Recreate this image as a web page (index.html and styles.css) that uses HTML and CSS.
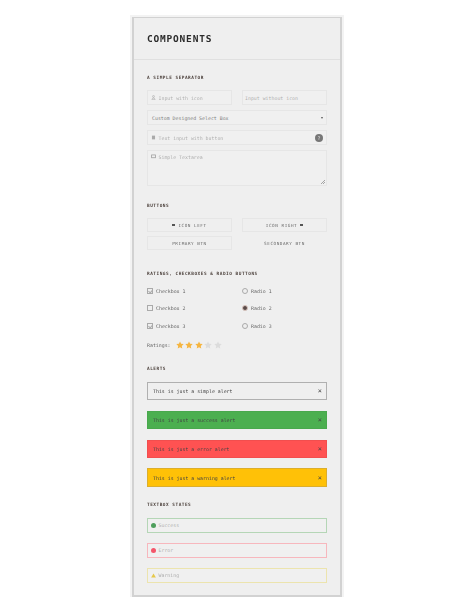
FILE: index.html
```html
<!DOCTYPE html>
<html lang="en">
<head>
  <meta charset="UTF-8" />
  <title>Components</title>
  <link rel="stylesheet" href="styles.css">
</head>
<body>
  <div class="card">
    <header class="card-head">
      <h1>COMPONENTS</h1>
    </header>
    <main class="card-body">
      <h2 class="sep sep-first">A SIMPLE SEPARATOR</h2>
      <div class="two-col">
        <div class="field">
          <svg class="ico" viewBox="0 0 8 8"><circle cx="4" cy="2.2" r="1.5" fill="none" stroke="#aaa" stroke-width=".9"/><path d="M1 7h6M2 7l1-2.500h2L6 7" fill="none" stroke="#aaa" stroke-width=".9"/></svg>
          <span>Input with icon</span>
        </div>
        <div class="field field-plain"><span>Input without icon</span></div>
      </div>
      <div class="field field-select"><span>Custom Designed Select Box</span><i class="caret"></i></div>
      <div class="field">
        <svg class="ico" viewBox="0 0 8 8"><rect x="1.500" y="1" width="5" height="6" fill="#aaa"/></svg>
        <span>Text input with button</span>
        <b class="round-btn">?</b>
      </div>
      <div class="field field-area">
        <svg class="ico" viewBox="0 0 8 8"><rect x="1" y="1.500" width="6" height="4.500" fill="none" stroke="#999" stroke-width="1.200"/></svg>
        <span>Simple Textarea</span>
        <svg class="grip" viewBox="0 0 5 5"><path d="M0 5L5 0M2.500 5L5 2.500" stroke="#777" stroke-width=".8"/></svg>
      </div>

      <h2 class="sep sep-buttons">BUTTONS</h2>
      <div class="btn-grid">
        <div class="btn"><i class="dot"></i>ICON LEFT</div>
        <div class="btn">ICON RIGHT<i class="dot"></i></div>
        <div class="btn">PRIMARY BTN</div>
        <div class="btn btn-flat">SECONDARY BTN</div>
      </div>

      <h2 class="sep sep-ratings">RATINGS, CHECKBOXES &amp; RADIO BUTTONS</h2>
      <div class="choices">
        <label class="choice"><i class="box box-on"></i>Checkbox 1</label>
        <label class="choice"><i class="radio"></i>Radio 1</label>
        <label class="choice"><i class="box"></i>Checkbox 2</label>
        <label class="choice"><i class="radio radio-on"></i>Radio 2</label>
        <label class="choice"><i class="box box-on"></i>Checkbox 3</label>
        <label class="choice"><i class="radio"></i>Radio 3</label>
      </div>
      <div class="ratings">
        <span>Ratings:</span>
        <span class="stars">
          <svg class="star on" viewBox="0 0 20 20"><path d="M10 1l2.800 6 6.400.8-4.700 4.400 1.200 6.500L10 15.500l-5.700 3.200 1.200-6.500L.8 7.800 7.200 7z"/></svg>
          <svg class="star on" viewBox="0 0 20 20"><path d="M10 1l2.800 6 6.400.8-4.700 4.400 1.200 6.500L10 15.500l-5.700 3.200 1.200-6.500L.8 7.800 7.200 7z"/></svg>
          <svg class="star on" viewBox="0 0 20 20"><path d="M10 1l2.800 6 6.400.8-4.700 4.400 1.200 6.500L10 15.500l-5.700 3.200 1.200-6.500L.8 7.800 7.200 7z"/></svg>
          <svg class="star" viewBox="0 0 20 20"><path d="M10 1l2.800 6 6.400.8-4.700 4.400 1.200 6.500L10 15.500l-5.700 3.200 1.200-6.500L.8 7.800 7.200 7z"/></svg>
          <svg class="star" viewBox="0 0 20 20"><path d="M10 1l2.800 6 6.400.8-4.700 4.400 1.200 6.500L10 15.500l-5.700 3.200 1.200-6.500L.8 7.800 7.200 7z"/></svg>
        </span>
      </div>

      <h2 class="sep sep-alerts">ALERTS</h2>
      <div class="alerts">
        <div class="alert">This is just a simple alert<b>×</b></div>
        <div class="alert alert-success">This is just a success alert<b>×</b></div>
        <div class="alert alert-error">This is just a error alert<b>×</b></div>
        <div class="alert alert-warning">This is just a warning alert<b>×</b></div>
      </div>

      <h2 class="sep sep-states">TEXTBOX STATES</h2>
      <div class="states">
        <div class="field state state-success"><i class="state-dot"></i><span>Success</span></div>
        <div class="field state state-error"><i class="state-dot"></i><span>Error</span></div>
        <div class="field state state-warning">
          <svg class="ico" viewBox="0 0 8 8"><path d="M4 .8L7.800 7.200H.2z" fill="#e6c84a"/></svg>
          <span>Warning</span>
        </div>
      </div>
    </main>
  </div>
</body>
</html>
```

FILE: styles.css
```css
:root {
  --bg: #efefef;
  --line: #e6e6e6;
  --muted: #b0b0b0;
  --text: #555;
}

* {
  box-sizing: border-box;
}

body {
  margin: 0;
  background-color: #fff;
  font-family: "DejaVu Sans Mono", monospace;
  color: var(--text);
}

.card {
  width: 210px;
  height: 580px;
  margin: 17px 0 0 132px;
  background-color: var(--bg);
  border: 2px solid #d2d2d2;
  border-top-width: 1px;
  box-shadow: 0 0 0 2px #f3f3f3;
  filter: blur(.3px);
}

.card-head {
  height: 42px;
  padding-left: 13px;
  border-bottom: 1px solid #e0e0e0;
  display: flex;
  align-items: center;
}

h1 {
  margin: 0;
  font-size: 9.500px;
  line-height: 14px;
  letter-spacing: .8px;
  color: #2b2b2b;
}

.card-body {
  padding: 0 13px;
}

.sep {
  margin: 0;
  height: 6px;
  font-size: 4.400px;
  line-height: 8px;
  letter-spacing: .52px;
  color: #4a3f3a;
}

.sep-first { margin-top: 14px; margin-bottom: 10px; }
.sep-buttons { margin-top: 16px; margin-bottom: 10px; }
.sep-ratings { margin-top: 20px; margin-bottom: 6px; }
.sep-alerts { margin-top: 11.500px; margin-bottom: 11px; }
.sep-states { margin-top: 14.200px; margin-bottom: 11px; }

.two-col {
  display: grid;
  grid-template-columns: 85px 85px;
  column-gap: 10px;
}

.field {
  position: relative;
  height: 15px;
  margin-bottom: 5px;
  padding: 0 3px;
  display: flex;
  align-items: center;
  gap: 2.500px;
  background-color: #f0f0f0;
  border: 1px solid var(--line);
  font-size: 4.900px;
  color: var(--muted);
}

.field-plain { padding-left: 2px; }

.field-select {
  padding-left: 4px;
  justify-content: space-between;
  color: #808080;
}

.caret {
  border-left: 1.500px solid transparent;
  border-right: 1.500px solid transparent;
  border-top: 2.500px solid #555;
}

.ico {
  width: 5px;
  height: 5px;
  flex: none;
}

.round-btn {
  position: absolute;
  right: 3px;
  top: 2.500px;
  width: 8px;
  height: 8px;
  border-radius: 50%;
  background-color: #777;
  color: #ccc;
  font-size: 5px;
  line-height: 8px;
  text-align: center;
}

.field-area {
  height: 36px;
  margin-bottom: 0;
  padding-top: 3px;
  align-items: flex-start;
}

.grip {
  position: absolute;
  right: 1px;
  bottom: 1px;
  width: 4px;
  height: 4px;
}

.btn-grid {
  display: grid;
  grid-template-columns: 85px 85px;
  column-gap: 10px;
  row-gap: 4px;
}

.btn {
  height: 14px;
  display: flex;
  align-items: center;
  justify-content: center;
  gap: 3px;
  border: 1px solid var(--line);
  font-size: 4.300px;
  letter-spacing: .55px;
  color: #6b6b6b;
}

.btn-flat { border-color: transparent; }

.dot {
  width: 3px;
  height: 2.500px;
  background-color: #555;
}

.choices {
  display: grid;
  grid-template-columns: 95px 85px;
  grid-auto-rows: 17.500px;
}

.choice {
  display: flex;
  align-items: center;
  gap: 3px;
  font-size: 4.900px;
  color: #666;
}

.box {
  position: relative;
  width: 6px;
  height: 6px;
  border: 1px solid #aaa;
}

.box-on::after {
  content: "";
  position: absolute;
  left: 1px;
  top: 0;
  width: 2px;
  height: 3px;
  border-right: 1px solid #aaa;
  border-bottom: 1px solid #aaa;
  transform: rotate(40deg);
}

.radio {
  width: 6px;
  height: 6px;
  border: 1px solid #aaa;
  border-radius: 50%;
}

.radio-on {
  background-color: #5a4a48;
  border-color: #d8c4bd;
}

.ratings {
  display: flex;
  align-items: center;
  gap: 5px;
  height: 17px;
  margin-top: 2px;
  font-size: 4.900px;
  color: #666;
}

.stars {
  display: flex;
  gap: 1.500px;
}

.star {
  width: 8px;
  height: 8px;
  fill: #dcdcdc;
}

.star.on { fill: #f5b541; }

.alerts {
  display: flex;
  flex-direction: column;
  gap: 10.400px;
}

.alert {
  height: 18.400px;
  padding: 0 4px 0 5px;
  display: flex;
  align-items: center;
  justify-content: space-between;
  border: 1px solid #b0b0b0;
  font-size: 4.900px;
  color: #444;
}

.alert b { font-size: 7px; font-weight: normal; }

.alert-success { background-color: #4caf50; border-color: #49a84d; }
.alert-error { background-color: #ff5252; border-color: #f24e4e; }
.alert-warning { background-color: #ffc107; border-color: #dcae2c; }

.states {
  display: flex;
  flex-direction: column;
  gap: 10px;
}

.state {
  margin-bottom: 0;
}

.state.state-success { border-color: #b5d6b6; }
.state.state-error { border-color: #f7b7bd; }
.state.state-warning { border-color: #ece4ae; }

.state-dot {
  width: 5px;
  height: 5px;
  border-radius: 50%;
}

.state-success .state-dot { background-color: #4f9f5c; }
.state-error .state-dot { background-color: #f4566a; }
```
